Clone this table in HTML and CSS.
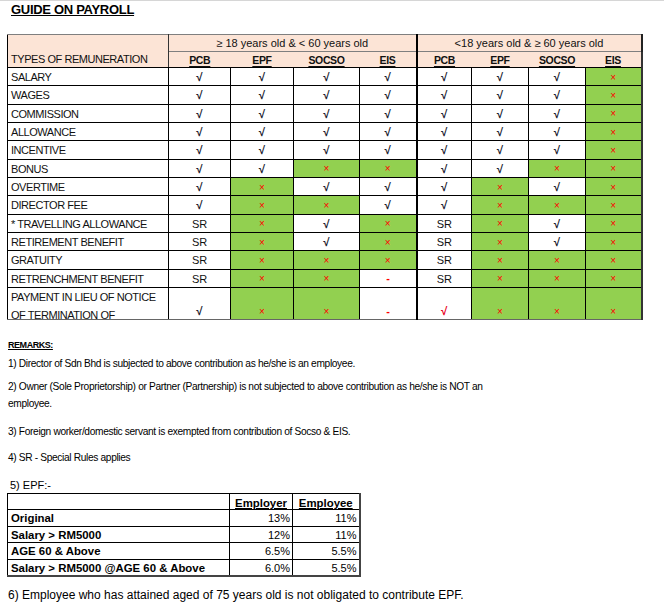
FILE: index.html
```html
<!DOCTYPE html>
<html lang="en">
<head>
<meta charset="utf-8">
<title>Guide on Payroll</title>
<link rel="stylesheet" href="styles.css">
</head>
<body>
<div class="page">
  <h1 class="title">GUIDE ON PAYROLL</h1>

  <table class="guide">
    <colgroup>
      <col class="w-type">
      <col class="w62"><col class="w63"><col class="w66"><col class="w57">
      <col class="w55"><col class="w57"><col class="w57"><col class="w56">
    </colgroup>
    <thead>
      <tr class="hrow1">
        <th class="type" rowspan="2">TYPES OF REMUNERATION</th>
        <th class="grp gend" colspan="4">≥ 18 years old &amp; &lt; 60 years old</th>
        <th class="grp" colspan="4">&lt;18 years old &amp; ≥ 60 years old</th>
      </tr>
      <tr class="hrow2">
        <th class="lbl"><u>PCB</u></th><th class="lbl"><u>EPF</u></th><th class="lbl"><u>SOCSO</u></th><th class="lbl gend"><u>EIS</u></th>
        <th class="lbl"><u>PCB</u></th><th class="lbl"><u>EPF</u></th><th class="lbl"><u>SOCSO</u></th><th class="lbl"><u>EIS</u></th>
      </tr>
    </thead>
    <tbody>
      <tr><td class="name">SALARY</td><td class="v">√</td><td class="v">√</td><td class="v">√</td><td class="v">√</td><td class="v">√</td><td class="v">√</td><td class="v">√</td><td class="x">×</td></tr>
      <tr><td class="name">WAGES</td><td class="v">√</td><td class="v">√</td><td class="v">√</td><td class="v">√</td><td class="v">√</td><td class="v">√</td><td class="v">√</td><td class="x">×</td></tr>
      <tr><td class="name">COMMISSION</td><td class="v">√</td><td class="v">√</td><td class="v">√</td><td class="v">√</td><td class="v">√</td><td class="v">√</td><td class="v">√</td><td class="x">×</td></tr>
      <tr><td class="name">ALLOWANCE</td><td class="v">√</td><td class="v">√</td><td class="v">√</td><td class="v">√</td><td class="v">√</td><td class="v">√</td><td class="v">√</td><td class="x">×</td></tr>
      <tr><td class="name">INCENTIVE</td><td class="v">√</td><td class="v">√</td><td class="v">√</td><td class="v">√</td><td class="v">√</td><td class="v">√</td><td class="v">√</td><td class="x">×</td></tr>
      <tr><td class="name">BONUS</td><td class="v">√</td><td class="v">√</td><td class="x">×</td><td class="x">×</td><td class="v">√</td><td class="v">√</td><td class="x">×</td><td class="x">×</td></tr>
      <tr><td class="name">OVERTIME</td><td class="v">√</td><td class="x">×</td><td class="v">√</td><td class="v">√</td><td class="v">√</td><td class="x">×</td><td class="v">√</td><td class="x">×</td></tr>
      <tr><td class="name">DIRECTOR FEE</td><td class="v">√</td><td class="x">×</td><td class="x">×</td><td class="v">√</td><td class="v">√</td><td class="x">×</td><td class="x">×</td><td class="x">×</td></tr>
      <tr><td class="name">* TRAVELLING ALLOWANCE</td><td class="sr">SR</td><td class="x">×</td><td class="v">√</td><td class="x">×</td><td class="sr">SR</td><td class="x">×</td><td class="v">√</td><td class="x">×</td></tr>
      <tr><td class="name">RETIREMENT BENEFIT</td><td class="sr">SR</td><td class="x">×</td><td class="v">√</td><td class="x">×</td><td class="sr">SR</td><td class="x">×</td><td class="v">√</td><td class="x">×</td></tr>
      <tr><td class="name">GRATUITY</td><td class="sr">SR</td><td class="x">×</td><td class="x">×</td><td class="x">×</td><td class="sr">SR</td><td class="x">×</td><td class="x">×</td><td class="x">×</td></tr>
      <tr><td class="name">RETRENCHMENT BENEFIT</td><td class="sr">SR</td><td class="x">×</td><td class="x">×</td><td class="d">-</td><td class="sr">SR</td><td class="x">×</td><td class="x">×</td><td class="x">×</td></tr>
      <tr class="last">
        <td class="name"><div class="clip">PAYMENT IN LIEU OF NOTICE<br>OF TERMINATION OF</div></td>
        <td class="v">√</td><td class="x">×</td><td class="x">×</td><td class="d">-</td><td class="v red">√</td><td class="x">×</td><td class="x">×</td><td class="x">×</td>
      </tr>
    </tbody>
  </table>

  <div class="remarks-title">REMARKS:</div>
  <div class="remark r1">1) Director of Sdn Bhd is subjected to above contribution as he/she is an employee.</div>
  <div class="remark r2">2) Owner (Sole Proprietorship) or Partner (Partnership) is not subjected to above contribution as he/she is NOT an<br>employee.</div>
  <div class="remark r3">3) Foreign worker/domestic servant is exempted from contribution of Socso &amp; EIS.</div>
  <div class="remark r4">4) SR - Special Rules applies</div>
  <div class="epf-title">5) EPF:-</div>

  <table class="epf">
    <colgroup><col class="e-lbl"><col class="e-er"><col class="e-ee"></colgroup>
    <tr><th></th><th class="eh"><u>Employer</u></th><th class="eh"><u>Employee</u></th></tr>
    <tr><th class="el">Original</th><td>13%</td><td>11%</td></tr>
    <tr><th class="el">Salary &gt; RM5000</th><td>12%</td><td>11%</td></tr>
    <tr><th class="el">AGE 60 &amp; Above</th><td>6.5%</td><td>5.5%</td></tr>
    <tr><th class="el">Salary &gt; RM5000 @AGE 60 &amp; Above</th><td>6.0%</td><td>5.5%</td></tr>
  </table>

  <div class="note6">6) Employee who has attained aged of 75 years old is not obligated to contribute EPF.</div>
</div>
</body>
</html>
```

FILE: styles.css
```css
html, body {
  margin: 0;
  padding: 0;
  background: #ffffff;
}
body {
  font-family: "Liberation Sans", Arial, sans-serif;
  color: #000;
}
.page {
  border-top: 1px solid #d6d6d6;
  padding-top: 1px;
  width: 664px;
}
.title {
  margin: 0 0 0 11px;
  font-size: 13px;
  font-weight: bold;
  line-height: 15px;
  letter-spacing: -0.3px;
  text-decoration: underline;
  text-underline-offset: 1px;
}

/* main table */
.guide {
  margin: 17px 0 0 7px;
  border-collapse: collapse;
  table-layout: fixed;
  width: 634px;
  font-size: 11px;
  letter-spacing: -0.45px;
  color: #111;
}
.w-type { width: 161px; }
.w62 { width: 62px; }
.w63 { width: 63px; }
.w66 { width: 66px; }
.w57 { width: 57px; }
.w55 { width: 55px; }
.w56 { width: 56px; }

.guide th {
  background: #fce4d6;
  font-weight: normal;
  padding: 0;
  color: #111;
}
.guide thead tr.hrow1 { height: 17px; }
.guide thead tr.hrow2 { height: 16px; }
.guide th.type {
  text-align: left;
  vertical-align: bottom;
  padding: 0 0 2px 3px;
  border: 1px solid #000;
  border-top: 1px solid #7f7f7f;
  border-right: 1px solid #333;
}
.guide th.grp {
  font-size: 11px;
  letter-spacing: 0;
  border-top: 1px solid #7f7f7f;
  border-bottom: 1px solid #7f7f7f;
  border-right: 2px solid #222;
  text-align: center;
}
.guide th.lbl {
  font-size: 10.5px;
  font-weight: bold;
  letter-spacing: -0.35px;
  text-align: center;
  border-bottom: 1px solid #000;
  vertical-align: middle;
  padding-top: 1px;
}
.guide th.lbl u { text-underline-offset: 2px; }
.guide th.gend { border-right: 2px solid #000; }
.guide th.lbl:last-child { border-right: 2px solid #333; }

.guide tbody tr { height: 18.33px; }
.guide tbody tr.last { height: 31.67px; }
.guide td {
  border: 1px solid #000;
  padding: 0;
  text-align: center;
  vertical-align: middle;
}
.guide td:nth-child(5) { border-right: 2px solid #000; }
.guide td:last-child { border-right: 2px solid #333; }
.guide tbody tr.last td { border-bottom: 1px solid #666; vertical-align: bottom; padding-bottom: 2px; }
.guide td.name {
  text-align: left;
  padding: 1px 0 0 3px;
}
.guide tbody tr.last td.name { padding: 0 0 0 3px; vertical-align: top; }
.clip {
  height: 31px;
  line-height: 18px;
  padding-top: 0.5px;
  white-space: nowrap;
}
.guide td.v {
  font-weight: bold;
  font-size: 11.5px;
  letter-spacing: 0;
  color: #1a1a2e;
  padding-top: 1px;
}
.guide td.v.red { color: #e8001c; }
.guide td.sr { padding-top: 1px; letter-spacing: -0.2px; }
.guide td.x {
  background: #92d050;
  color: #ff0000;
  font-size: 10px;
  letter-spacing: 0;
  padding-top: 1px;
}
.guide td.d {
  color: #ff0000;
  font-weight: bold;
}

/* remarks */
.remarks-title {
  margin: 17px 0 0 8px;
  font-size: 9px;
  font-weight: bold;
  letter-spacing: -0.45px;
  line-height: 17.5px;
  text-decoration: underline;
}
.remark {
  margin-left: 8px;
  font-size: 10.2px;
  letter-spacing: -0.35px;
  line-height: 17.5px;
}
.r2 { margin-top: 5.5px; }
.r3 { margin-top: 9.7px; }
.r4 { margin-top: 9.1px; }
.epf-title {
  margin: 11.3px 0 0 10px;
  font-size: 11px;
  line-height: 14px;
}

/* EPF table */
.epf {
  margin: 0.6px 0 0 7px;
  border-collapse: collapse;
  table-layout: fixed;
  width: 352px;
  font-size: 11.4px;
}
.e-lbl { width: 222px; }
.e-er { width: 63px; }
.e-ee { width: 67px; }
.epf tr { height: 16.6px; }
.epf th, .epf td {
  border: 1px solid #000;
  padding: 0;
}
.epf tr > *:last-child { border-right: 2px solid #444; }
.epf tr:last-child > * { border-bottom: 2px solid #444; }
.epf th.eh {
  text-align: center;
  vertical-align: bottom;
  padding-bottom: 0;
}
.epf th.eh u { text-underline-offset: 1px; }
.epf th.el {
  text-align: left;
  padding-left: 3px;
}
.epf td {
  text-align: right;
  padding-right: 2px;
  font-size: 11px;
}

.note6 {
  margin: 10.2px 0 0 8px;
  font-size: 12px;
  line-height: 17px;
}
```
